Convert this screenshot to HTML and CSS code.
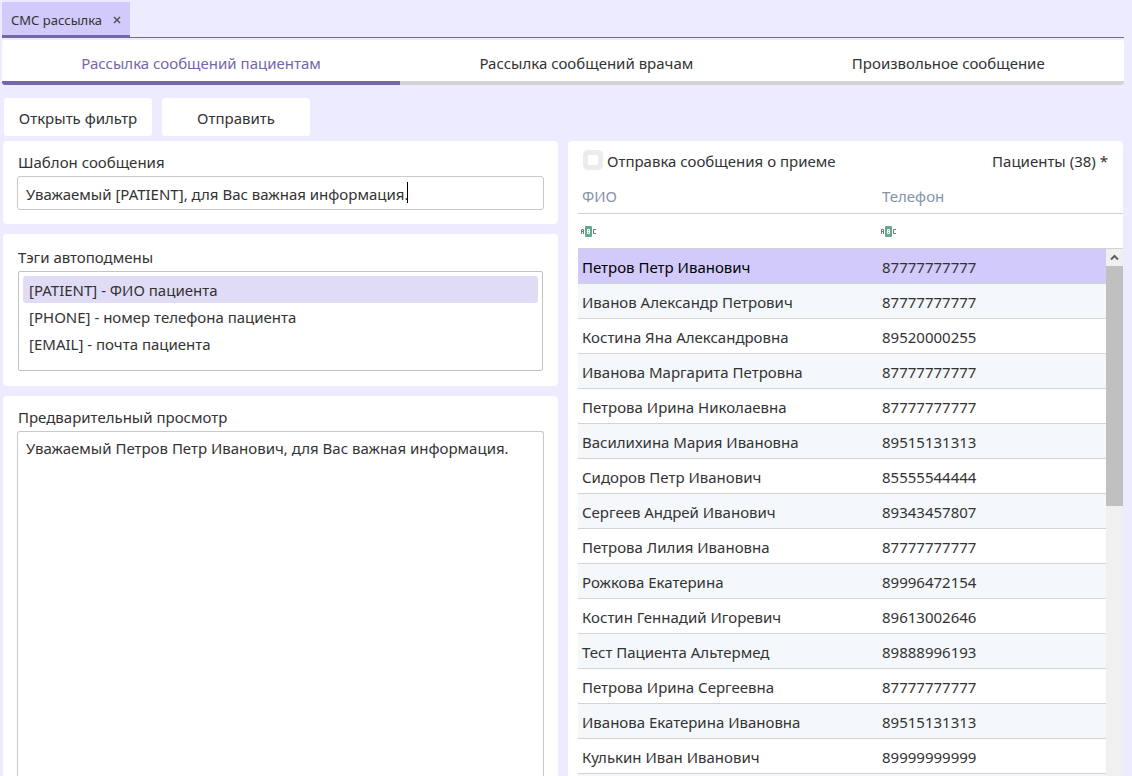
FILE: index.html
```html
<!DOCTYPE html>
<html lang="ru">
<head>
  <meta charset="UTF-8">
  <title>СМС рассылка</title>
  <link rel="stylesheet" href="styles.css">
</head>
<body>
  <!-- Вкладки приложения -->
  <div class="app-tabs">
    <div class="app-tab">
      <span>СМС рассылка</span>
      <button class="tab-close" type="button" aria-label="Закрыть">
        <svg width="8" height="8" viewBox="0 0 8 8"><path d="M1 1l6 6M7 1l-6 6" stroke="#555" stroke-width="1.5" fill="none"/></svg>
      </button>
    </div>
  </div>

  <!-- Режимы рассылки -->
  <nav class="mode-tabs">
    <button class="mode-tab active" type="button">Рассылка сообщений пациентам</button>
    <button class="mode-tab" type="button">Рассылка сообщений врачам</button>
    <button class="mode-tab" type="button">Произвольное сообщение</button>
  </nav>

  <div class="toolbar">
    <button class="tool-button" type="button">Открыть фильтр</button>
    <button class="tool-button" type="button">Отправить</button>
  </div>

  <div class="content">
    <div class="column">
      <section class="panel">
        <label class="panel-label" for="template">Шаблон сообщения</label>
        <div class="template-field">
          <input type="text" id="template" class="field" value="Уважаемый [PATIENT], для Вас важная информация.">
          <span class="caret"></span>
        </div>
      </section>

      <section class="panel tags-panel">
        <div class="panel-label" id="tags-label">Тэги автоподмены</div>
        <ul class="tag-list" role="listbox" aria-labelledby="tags-label">
          <li class="tag selected" role="option" aria-selected="true">[PATIENT] - ФИО пациента</li>
          <li class="tag" role="option">[PHONE] - номер телефона пациента</li>
          <li class="tag" role="option">[EMAIL] - почта пациента</li>
        </ul>
      </section>

      <section class="panel preview-panel">
        <label class="panel-label" for="preview">Предварительный просмотр</label>
        <textarea id="preview" class="field preview" readonly>Уважаемый Петров Петр Иванович, для Вас важная информация.</textarea>
      </section>
    </div>

    <section class="patients">
      <div class="patients-head">
        <label class="check"><input type="checkbox" class="checkbox">Отправка сообщения о приеме</label>
        <span>Пациенты (38) *</span>
      </div>

      <table class="grid grid-header">
        <thead>
          <tr><th class="col-name">ФИО</th><th>Телефон</th></tr>
          <tr class="filter-row">
            <td><svg class="abc" width="16" height="11" viewBox="0 0 16 11"><use href="#abc"/></svg></td>
            <td><svg class="abc" width="16" height="11" viewBox="0 0 16 11"><use href="#abc"/></svg></td>
          </tr>
        </thead>
      </table>

      <div class="grid-body">
        <table class="grid">
          <tbody>
            <tr class="current"><td class="col-name">Петров Петр Иванович</td><td>87777777777</td></tr>
            <tr><td>Иванов Александр Петрович</td><td>87777777777</td></tr>
            <tr><td>Костина Яна Александровна</td><td>89520000255</td></tr>
            <tr><td>Иванова Маргарита Петровна</td><td>87777777777</td></tr>
            <tr><td>Петрова Ирина Николаевна</td><td>87777777777</td></tr>
            <tr><td>Василихина Мария Ивановна</td><td>89515131313</td></tr>
            <tr><td>Сидоров Петр Иванович</td><td>85555544444</td></tr>
            <tr><td>Сергеев Андрей Иванович</td><td>89343457807</td></tr>
            <tr><td>Петрова Лилия Ивановна</td><td>87777777777</td></tr>
            <tr><td>Рожкова Екатерина</td><td>89996472154</td></tr>
            <tr><td>Костин Геннадий Игоревич</td><td>89613002646</td></tr>
            <tr><td>Тест Пациента Альтермед</td><td>89888996193</td></tr>
            <tr><td>Петрова Ирина Сергеевна</td><td>87777777777</td></tr>
            <tr><td>Иванова Екатерина Ивановна</td><td>89515131313</td></tr>
            <tr><td>Кулькин Иван Иванович</td><td>89999999999</td></tr>
            <tr><td></td><td></td></tr>
          </tbody>
        </table>
        <div class="scrollbar">
          <svg class="scroll-up" width="17" height="17" viewBox="0 0 17 17"><path d="M5 10.5l3.5-3.5 3.5 3.5" stroke="#606060" stroke-width="2" fill="none"/></svg>
          <div class="scroll-thumb"></div>
        </div>
      </div>
    </section>
  </div>

  <!-- Значок текстового фильтра -->
  <svg width="0" height="0" class="sprites">
    <symbol id="abc" viewBox="0 0 16 11">
      <rect x="4" y="0" width="7" height="11" rx="1" fill="#67a891"/>
      <path d="M.5 8V3.5h2V8M.5 5.5h2M15 3.5h-2.500v4H15" stroke="#777" fill="none"/>
      <path d="M6.500 3.500h2v4h-2zM6.500 5.500h2" stroke="#fff" fill="none"/>
    </symbol>
  </svg>
</body>
</html>
```

FILE: styles.css
```css
* {
  box-sizing: border-box;
}

body {
  margin: 0;
  padding: 2px 8px 0 2px;
  height: 100vh;
  display: flex;
  flex-direction: column;
  overflow: hidden;
  background-color: #edebff;
  color: #333;
  font-family: "Noto Sans", "Open Sans", sans-serif;
  font-size: 15px;
  line-height: 20px;
}

button,
input,
textarea {
  font: inherit;
  color: inherit;
}

button {
  border: none;
  padding: 0;
  cursor: pointer;
}

.sprites {
  position: absolute;
}

/* Вкладки приложения */
.app-tabs {
  display: flex;
  height: 36px;
  border-bottom: 1px solid #7565aa;
}

.app-tab {
  display: flex;
  align-items: center;
  gap: 11px;
  padding: 2px 9px 0;
  background-color: #d2cafa;
  border-bottom: 2px solid #7565aa;
  font-size: 13px;
}

.tab-close {
  display: flex;
  background: none;
}

/* Режимы рассылки */
.mode-tabs {
  display: flex;
  flex: none;
  height: 45px;
  margin-top: 2px;
  border-radius: 3px;
  overflow: hidden;
  background-color: #fff;
}

.mode-tab {
  flex: 1 1 auto;
  padding-top: 5px;
  background-color: #fff;
  border-bottom: 4px solid #d3d3d3;
}

.mode-tab.active {
  color: #7565aa;
  border-bottom-color: #7565aa;
}

.toolbar {
  display: flex;
  gap: 10px;
  padding: 13px 2px 5px;
}

.tool-button {
  width: 148px;
  height: 38px;
  padding-top: 2px;
  background-color: #fff;
  border-radius: 3px;
}

/* Основная область */
.content {
  flex: 1;
  min-height: 0;
  display: grid;
  grid-template-columns: 1fr 1fr;
  grid-template-rows: minmax(0, 1fr);
  gap: 10px;
  padding: 0 1px;
}

.column {
  display: flex;
  flex-direction: column;
  gap: 10px;
  min-width: 0;
}

.panel {
  padding: 11px 14px 14px;
  background-color: #fff;
  border-radius: 4px;
}

.panel-label {
  display: block;
  padding: 0 1px;
  margin-bottom: 4px;
}

.field {
  display: block;
  width: 100%;
  height: 34px;
  padding: 2px 8px 0;
  border: 1px solid #c9c9c9;
  border-radius: 3px;
  background-color: #fff;
  outline: none;
}

.template-field {
  position: relative;
}

.caret {
  position: absolute;
  left: 390px;
  top: 6px;
  width: 1px;
  height: 21px;
  background-color: #000;
}

.tags-panel {
  padding-top: 13px;
  padding-bottom: 15px;
}

.tag-list {
  height: 100px;
  margin: 0 1px;
  padding: 4px;
  list-style: none;
  border: 1px solid #c2c2c2;
  border-radius: 2px;
}

.tag {
  height: 27px;
  padding: 0 6px;
  line-height: 28px;
  border-radius: 3px;
}

.tag.selected {
  background-color: #e1dcf5;
}

.preview-panel {
  flex: 1;
  display: flex;
  flex-direction: column;
  padding-bottom: 0;
  border-radius: 4px 4px 0 0;
}

.preview {
  flex: 1;
  padding-top: 6px;
  border-bottom: none;
  border-radius: 3px 3px 0 0;
  resize: none;
}

/* Список пациентов */
.patients {
  display: flex;
  flex-direction: column;
  padding-left: 10px;
  background-color: #fff;
  border-radius: 4px 4px 0 0;
  overflow: hidden;
}

.patients-head {
  display: flex;
  justify-content: space-between;
  padding: 9px 15px 0 5px;
  height: 38px;
  line-height: 22px;
}

.check {
  display: flex;
  gap: 4px;
}

.checkbox {
  appearance: none;
  width: 20px;
  height: 20px;
  margin: 0;
  border: 5px solid #ececec;
  border-radius: 5px;
  background-color: #fff;
}

.grid {
  width: 100%;
  border-collapse: separate;
  border-spacing: 0;
  table-layout: fixed;
}

.grid th,
.grid td {
  height: 35px;
  padding: 2px 4px 0;
  text-align: left;
  border-bottom: 1px solid #d3d3d3;
}

.grid th {
  padding-top: 0;
  color: #8493a8;
  font-weight: normal;
}

.col-name {
  width: 300px;
}

.grid .filter-row td {
  padding: 0 3px;
}

.abc {
  display: block;
}

.grid-body {
  flex: 1;
  min-height: 0;
  display: flex;
  align-items: flex-start;
  overflow: hidden;
}

.grid-body tr:nth-child(even) {
  background-color: #f4f8fb;
}

.grid-body .current {
  background-color: #d2cafa;
}

.current .col-name {
  color: #000;
}

.scrollbar {
  flex: none;
  align-self: stretch;
  width: 17px;
  background-color: #f0f0f0;
}

.scroll-up {
  display: block;
}

.scroll-thumb {
  height: 240px;
  background-color: #c0c0c0;
}
```
